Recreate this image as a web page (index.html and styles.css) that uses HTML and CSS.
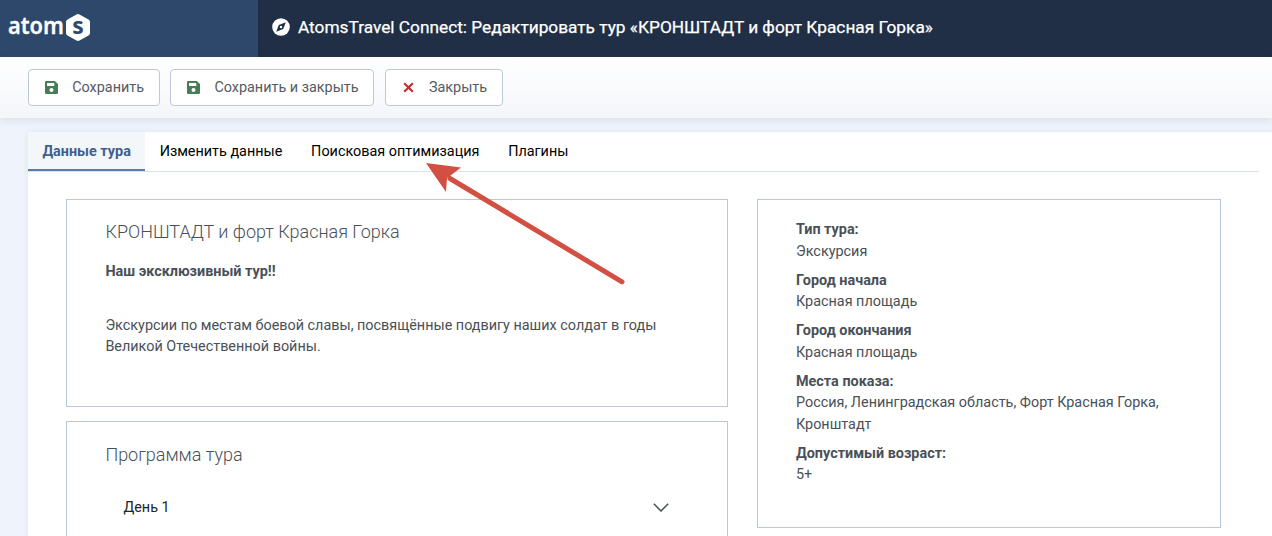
FILE: index.html
```
<!DOCTYPE html>
<html lang="ru">
<head>
  <meta charset="UTF-8">
  <meta name="viewport" content="width=device-width, initial-scale=1.0">
  <title>AtomsTravel Connect: Редактировать тур</title>
  <link rel="stylesheet" href="styles.css">
</head>
<body>
  <header class="header">
    <a class="logo" href="#">
      <svg class="logo-img" viewBox="0 0 84 28">
        <text class="logo-text" x="0" y="19.800" textLength="56" lengthAdjust="spacingAndGlyphs">atom</text>
        <path d="M68.500.4a3 3 0 0 1 3 0l9 5.100a3 3 0 0 1 1.500 2.600v10.800a3 3 0 0 1-1.500 2.600l-9 5.100a3 3 0 0 1-3 0l-9-5.100a3 3 0 0 1-1.500-2.600V8.100a3 3 0 0 1 1.500-2.600z" fill="#fff"/>
        <text class="logo-s" x="70" y="20" text-anchor="middle">s</text>
      </svg>
    </a>
    <h1 class="page-title">
      <svg class="title-icon" viewBox="0 0 18 18">
        <circle cx="9" cy="9" r="8.800" fill="#fff"/>
        <path d="M13.800 4.200 11.200 11 4.200 13.800 6.800 7z" fill="#202f46"/>
        <circle cx="9" cy="9" r="1.200" fill="#fff"/>
      </svg>
      AtomsTravel Connect: Редактировать тур «КРОНШТАДТ и форт Красная Горка»
    </h1>
  </header>

  <div class="toolbar">
    <button class="btn">
      <svg class="icon-save" viewBox="0 0 13 13"><path fill-rule="evenodd" d="M1.300 0H9.800L13 3V11.700A1.300 1.300 0 0 1 11.700 13H1.300A1.300 1.300 0 0 1 0 11.700V1.300A1.300 1.300 0 0 1 1.300 0zM2 2V5H9.300V2zM6.500 7A2 2 0 1 0 6.500 11 2 2 0 0 0 6.500 7z"/></svg>
      Сохранить
    </button>
    <button class="btn">
      <svg class="icon-save" viewBox="0 0 13 13"><path fill-rule="evenodd" d="M1.300 0H9.800L13 3V11.700A1.300 1.300 0 0 1 11.700 13H1.300A1.300 1.300 0 0 1 0 11.700V1.300A1.300 1.300 0 0 1 1.300 0zM2 2V5H9.300V2zM6.500 7A2 2 0 1 0 6.500 11 2 2 0 0 0 6.500 7z"/></svg>
      Сохранить и закрыть
    </button>
    <button class="btn">
      <svg class="icon-close" viewBox="0 0 13 13"><path d="M2.200 2.200 10.800 10.800M10.800 2.200 2.200 10.800"/></svg>
      Закрыть
    </button>
  </div>

  <main class="content">
    <nav class="tabs">
      <a class="tab active" href="#">Данные тура</a>
      <a class="tab" href="#">Изменить данные</a>
      <a class="tab" href="#">Поисковая оптимизация</a>
      <a class="tab" href="#">Плагины</a>
    </nav>
    <div class="row">
      <div class="col-main">
        <section class="card card-about">
          <h2>КРОНШТАДТ и форт Красная Горка</h2>
          <p><strong>Наш эксклюзивный тур!!</strong></p>
          <p class="descr">Экскурсии по местам боевой славы, посвящённые подвигу наших солдат в годы Великой Отечественной войны.</p>
        </section>
        <section class="card card-program">
          <h2>Программа тура</h2>
          <div class="day">
            <span>День 1</span>
            <svg class="chevron" viewBox="0 0 16 9"><path d="M.8.800 8 8 15.200.800"/></svg>
          </div>
        </section>
      </div>
      <aside class="card card-info">
        <dl>
          <dt>Тип тура:</dt>
          <dd>Экскурсия</dd>
          <dt>Город начала</dt>
          <dd>Красная площадь</dd>
          <dt>Город окончания</dt>
          <dd>Красная площадь</dd>
          <dt>Места показа:</dt>
          <dd>Россия, Ленинградская область, Форт Красная Горка, Кронштадт</dd>
          <dt>Допустимый возраст:</dt>
          <dd>5+</dd>
        </dl>
      </aside>
    </div>
  </main>

  <svg class="arrow" viewBox="0 0 200 124">
    <path class="arrow-line" d="M24 15.500 196 118.800"/>
    <path class="arrow-head" d="M0 0 35 4.500 24 13 21 15 20 29z"/>
  </svg>
</body>
</html>
```
FILE: styles.css
```
* {
  box-sizing: border-box;
}
body {
  display: flex;
  flex-direction: column;
  margin: 0;
  height: 536px;
  overflow: hidden;
  background: #eff3fb;
  color: #495057;
  font-family: Roboto, "Liberation Sans", sans-serif;
  font-size: 14.4px;
  line-height: 21.5px;
}
a {
  text-decoration: none;
}

/* header */
.header {
  display: flex;
  flex: none;
  height: 57px;
  background: #202f46;
  color: #fff;
}
.logo {
  width: 258px;
  padding: 14px 0 0 8px;
  background: #2e486b;
}
.logo-img {
  display: block;
  width: 84px;
  height: 28px;
  overflow: visible;
}
.logo-text {
  font: 600 24px "Noto Sans", sans-serif;
  fill: #fff;
  stroke: #fff;
  stroke-width: 0.3;
}
.logo-s {
  font: 700 23px "Noto Sans", sans-serif;
  fill: #2e486b;
}
.page-title {
  display: flex;
  align-items: center;
  gap: 8px;
  margin: 0;
  padding: 0 0 2px 14px;
  font-size: 17.28px;
  font-weight: 400;
  -webkit-text-stroke: 0.25px #fff;
}
.title-icon {
  width: 18px;
  height: 18px;
  margin-bottom: 1px;
}

/* toolbar */
.toolbar {
  position: relative;
  display: flex;
  flex: none;
  gap: 10.6px;
  height: 61px;
  padding: 12px 28px;
  background: linear-gradient(#fff, #f4f6fa);
  box-shadow: 0 3px 8px rgba(46, 72, 107, 0.1);
}
.btn {
  display: flex;
  align-items: center;
  height: 37px;
  padding: 0 14.6px 1px 16.2px;
  background: #fff;
  border: 1px solid #bfc8d8;
  border-radius: 4px;
  color: #545b63;
  font-family: inherit;
  font-size: 14.4px;
}
.icon-save, .icon-close {
  width: 13px;
  height: 13px;
  margin-right: 14px;
}
.icon-save {
  fill: #457d54;
}
.icon-close {
  fill: none;
  stroke: #c52827;
  stroke-width: 2;
}

/* tabs */
.content {
  flex: 1;
  min-height: 0;
  margin: 14px 0 0 28px;
  overflow: hidden;
  background: #fff;
  box-shadow: 0 0 6px rgba(46, 72, 107, 0.08);
}
.tabs {
  display: flex;
  height: 40px;
  margin-right: 13px;
  border-bottom: 1px solid #d9e1ec;
}
.tab {
  height: 39px;
  padding: 9px 14.4px 0;
  color: #000;
}
.tab.active {
  background: #f3f7fa;
  border-bottom: 2px solid #5b7bab;
  color: #3f608f;
  font-weight: 700;
}

/* cards */
.row {
  display: flex;
  align-items: flex-start;
  gap: 29px;
  padding: 27px 0 0 38px;
}
.col-main {
  width: 662px;
}
.card {
  border: 1px solid #b8c7dd;
  padding: 20px 38.4px;
}
.card h2 {
  margin: 0;
  font-size: 18px;
  font-weight: 300;
  line-height: 24px;
}
.card p {
  margin: 17px 0 0;
}
.card-about {
  height: 208px;
  margin-bottom: 14px;
}
.card .descr {
  margin-top: 32px;
}
.card-program {
  height: 115px;
  padding-top: 21px;
  border-bottom: 0;
}
.day {
  display: flex;
  align-items: center;
  justify-content: space-between;
  margin-top: 30px;
  padding: 0 19.6px 0 18px;
  color: #212529;
}
.chevron {
  width: 16px;
  height: 9px;
  fill: none;
  stroke: #495057;
  stroke-width: 1.5;
}
.card-info {
  width: 464px;
  height: 329px;
  padding-top: 19px;
  padding-left: 38px;
}
.card-info dl {
  margin: 0;
}
.card-info dt {
  font-weight: 700;
}
.card-info dd {
  margin: 0 0 7.5px;
}

/* pointer to the SEO tab */
.arrow {
  position: absolute;
  left: 426px;
  top: 163px;
  width: 200px;
  height: 124px;
}
.arrow-line {
  stroke: #d15042;
  stroke-width: 5;
  stroke-linecap: round;
}
.arrow-head {
  fill: #d15042;
}
```
